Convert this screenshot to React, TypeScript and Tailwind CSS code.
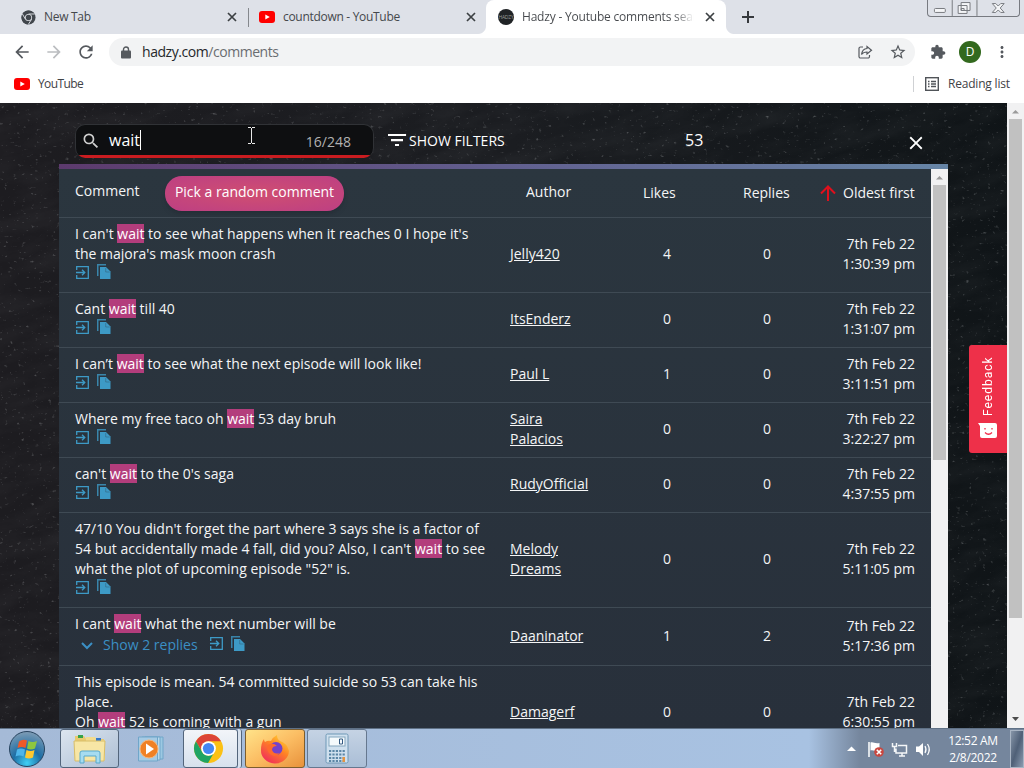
import type { ReactNode } from "react";
import { MdSearch, MdClose, MdStarBorder, MdMoreVert, MdArrowBack, MdArrowForward, MdRefresh } from "react-icons/md";

type Comment = {
  lines: string[];
  author: string[];
  likes: number;
  replies: number;
  date: string;
  time: string;
};

const comments: Comment[] = [
  {
    lines: ["I can't wait to see what happens when it reaches 0 I hope it's", "the majora's mask moon crash"],
    author: ["Jelly420"],
    likes: 4,
    replies: 0,
    date: "7th Feb 22",
    time: "1:30:39 pm",
  },
  { lines: ["Cant wait till 40"], author: ["ItsEnderz"], likes: 0, replies: 0, date: "7th Feb 22", time: "1:31:07 pm" },
  {
    lines: ["I can’t wait to see what the next episode will look like!"],
    author: ["Paul L"],
    likes: 1,
    replies: 0,
    date: "7th Feb 22",
    time: "3:11:51 pm",
  },
  {
    lines: ["Where my free taco oh wait 53 day bruh"],
    author: ["Saira", "Palacios"],
    likes: 0,
    replies: 0,
    date: "7th Feb 22",
    time: "3:22:27 pm",
  },
  { lines: ["can't wait to the 0's saga"], author: ["RudyOfficial"], likes: 0, replies: 0, date: "7th Feb 22", time: "4:37:55 pm" },
  {
    lines: [
      "47/10 You didn't forget the part where 3 says she is a factor of",
      "54 but accidentally made 4 fall, did you? Also, I can't wait to see",
      'what the plot of upcoming episode "52" is.',
    ],
    author: ["Melody", "Dreams"],
    likes: 0,
    replies: 0,
    date: "7th Feb 22",
    time: "5:11:05 pm",
  },
  {
    lines: ["I cant wait what the next number will be"],
    author: ["Daaninator"],
    likes: 1,
    replies: 2,
    date: "7th Feb 22",
    time: "5:17:36 pm",
  },
  {
    lines: ["This episode is mean. 54 committed suicide so 53 can take his", "place.", "Oh wait 52 is coming with a gun"],
    author: ["Damagerf"],
    likes: 0,
    replies: 0,
    date: "7th Feb 22",
    time: "6:30:55 pm",
  },
];

const Highlight = ({ text }: { text: string }) => (
  <>
    {text.split(/(wait)/).map((part, i) =>
      part === "wait" ? (
        <mark key={i} className="bg-[#b33d7c] text-white">
          {part}
        </mark>
      ) : (
        part
      )
    )}
  </>
);

const YoutubeIcon = () => (
  <svg viewBox="0 0 16 12" className="h-3 w-4 shrink-0">
    <rect width="16" height="12" rx="3" fill="#f00" />
    <path d="M6.3 3.4v5.2L10.8 6z" fill="#fff" />
  </svg>
);

const ChromeLogo = ({ className, mono }: { className: string; mono?: boolean }) => (
  <svg viewBox="0 0 32 32" className={className}>
    <circle cx="16" cy="16" r="15" fill={mono ? "#41464c" : "#fbc116"} />
    <path d="M3 8.5A15 15 0 0 1 29 8.5H16A7.5 7.5 0 0 0 9.5 19.7z" fill={mono ? "#41464c" : "#dc4437"} />
    <path d="M3 8.5A15 15 0 0 0 15.5 31l6.6-11.3a7.2 7.2 0 0 1-12.6 0z" fill={mono ? "#41464c" : "#1fa463"} />
    {mono && <path d="M16 8.5h13M9.5 19.7 3 8.5M22.5 19.7 15.5 31" stroke="#dee1e6" strokeWidth="2" />}
    <circle cx="16" cy="16" r="7.6" fill={mono ? "#dee1e6" : "#fff"} />
    <circle cx="16" cy="16" r="5.8" fill={mono ? "#41464c" : "#4487f3"} />
  </svg>
);

const CloseTab = () => (
  <svg viewBox="0 0 10 10" className="h-2.5 w-2.5 shrink-0" stroke="#3c4043" strokeWidth="1.7">
    <path d="m1 1 8 8M9 1 1 9" />
  </svg>
);

const TabBar = () => (
  <div className="flex h-[34px] shrink-0 bg-[#dee1e8] text-[12px] tracking-[-0.3px] text-[#45484c]">
    <div className="flex w-[248px] items-center pl-[21px]">
      <ChromeLogo className="h-[15px] w-[15px]" mono />
      <span className="ml-2 w-[183px]">New Tab</span>
      <CloseTab />
    </div>
    <div className="flex w-[230px] items-center">
      <span className="h-[19px] w-px bg-[#85888d]" />
      <span className="ml-2.5 flex">
        <YoutubeIcon />
      </span>
      <span className="ml-2 w-[183px]">countdown - YouTube</span>
      <CloseTab />
    </div>
    <span className="h-2 w-2 self-end bg-[radial-gradient(circle_at_0_0,#dee1e8_7.5px,#fff_8.5px)]" />
    <div className="flex w-[240px] items-center rounded-t-lg bg-white pl-3">
      <svg viewBox="0 0 16 16" className="h-4 w-4 shrink-0">
        <circle cx="8" cy="8" r="8" fill="#202326" />
        <text x="8" y="10" fontSize="5" fill="#999" textAnchor="middle" letterSpacing="-.2">
          HADZY
        </text>
      </svg>
      <span className="ml-2 w-[172px] overflow-hidden bg-linear-to-r from-[#45484c] from-88% to-transparent bg-clip-text tracking-[-0.2px] whitespace-nowrap text-transparent">
        Hadzy - Youtube comments sear
      </span>
      <span className="ml-[11px]">
        <CloseTab />
      </span>
    </div>
    <span className="h-2 w-2 self-end bg-[radial-gradient(circle_at_100%_0,#dee1e8_7.5px,#fff_8.5px)]" />
    <svg viewBox="0 0 12 12" className="mt-[11px] ml-2 h-3 w-3" stroke="#36393d" strokeWidth="2">
      <path d="M6 0v12M0 6h12" />
    </svg>
    <div className="ml-auto flex h-[17px] w-[93px] rounded-b-[4px] border border-t-0 border-[#777a80]">
      <svg viewBox="0 0 92 16" className="h-4 w-[92px]" fill="none" stroke="#777a80">
        <path d="M24.500 0v16M49.500 0v16" />
        <rect x="6.500" y="8.500" width="11" height="4" rx="1" fill="#f4f5f7" />
        <path d="M33.500 2.500h9v8h-9zM30.500 5.500h9v8h-9zM33.500 8.500h3v2h-3z" fill="#f4f5f7" />
        <path d="M65 3.500h3.500L71 6l2.500-2.500H77L73 8l4 4.500h-3.500L71 10l-2.500 2.500H65L69 8z" fill="#f4f5f7" />
      </svg>
    </div>
    <span className="w-[4px]" />
  </div>
);

const AddressBar = () => (
  <div className="flex h-9 shrink-0 items-center bg-white text-[#55595e]">
    <MdArrowBack className="ml-3 h-5 w-5" />
    <MdArrowForward className="ml-3 h-5 w-5 text-[#bbbdc0]" />
    <MdRefresh className="ml-3 h-5 w-5" />
    <div className="ml-[13px] flex h-7 w-[806px] items-center rounded-full bg-[#f2f3f4] pl-3 text-[14px] leading-5">
      <svg viewBox="0 0 10 13" className="h-[13px] w-2.5">
        <rect y="4.500" width="10" height="8" rx="1" fill="#55595e" />
        <path d="M2.500 5V3.500a2.500 2.500 0 0 1 5 0V5" fill="none" stroke="#55595e" strokeWidth="1.400" />
      </svg>
      <span className="ml-[11px] w-[693px] tracking-[-0.45px] text-[#6a6d71]">
        <span className="text-[#25282b]">hadzy.com</span>/comments
      </span>
      <svg viewBox="0 0 16 16" className="ml-[22px] h-4 w-4" fill="none" stroke="currentColor" strokeWidth="1.200">
        <path d="M6 3H3.500A1.500 1.500 0 0 0 2 4.500v8A1.500 1.500 0 0 0 3.500 14H11a1.500 1.500 0 0 0 1.500-1.500V11" />
        <path d="M10 2.500v2C6.500 4.800 5 7 4.500 10.500 6 8.400 7.500 8 10 8v2l4.500-3.800z" />
      </svg>
      <MdStarBorder className="ml-4 h-[18px] w-[18px]" />
    </div>
    <svg viewBox="0 0 24 24" className="ml-[15px] h-4 w-4" fill="currentColor">
      <path d="M20.500 11H19V7c0-1.100-.9-2-2-2h-4V3.500C13 2.120 11.880 1 10.500 1S8 2.120 8 3.500V5H4c-1.100 0-2 .9-2 2v3.800h1.500c1.500 0 2.700 1.200 2.700 2.700s-1.200 2.700-2.700 2.700H2V20c0 1.100.9 2 2 2h3.800v-1.500c0-1.500 1.200-2.700 2.700-2.700s2.700 1.200 2.700 2.700V22H17c1.100 0 2-.9 2-2v-4h1.500c1.380 0 2.500-1.120 2.500-2.500S21.880 11 20.500 11z" />
    </svg>
    <span className="ml-[13px] flex h-[22px] w-[22px] items-center justify-center rounded-full bg-[#33691e] text-[12px] text-white">D</span>
    <MdMoreVert className="ml-3 h-[18px] w-[18px]" />
  </div>
);

const BookmarkBar = () => (
  <div className="flex h-[33px] shrink-0 items-center bg-white pb-[5px] text-[12px] tracking-[-0.6px] text-[#3f4246]">
    <span className="ml-3.5 flex">
      <YoutubeIcon />
    </span>
    <span className="ml-2">YouTube</span>
    <span className="ml-auto h-4 w-px bg-[#cfd1d4]" />
    <svg viewBox="0 0 14 14" className="ml-[11px] h-3.5 w-3.5" fill="none" stroke="#505459" strokeWidth="1.400">
      <rect x=".7" y=".7" width="12.600" height="12.600" />
      <path d="M3 4.500h1.500M3 7h1.500M3 9.500h1.500M6 4.500h5M6 7h5M6 9.500h5" />
    </svg>
    <span className="ml-[9px] w-[76px] tracking-[-0.2px] whitespace-nowrap">Reading list</span>
  </div>
);

const StoneBackground = () => (
  <svg className="absolute inset-0 h-full w-full" preserveAspectRatio="none">
    <defs>
      <linearGradient id="shade">
        <stop offset="0" stopColor="#1d1c20" />
        <stop offset=".5" stopColor="#1b1d21" />
        <stop offset="1" stopColor="#0f1417" />
      </linearGradient>
      <filter id="stone" x="0" y="0" width="100%" height="100%">
        <feTurbulence type="fractalNoise" baseFrequency="0.017 0.051" numOctaves="5" seed="8" />
        <feColorMatrix values="0 0 0 0 0.5  0 0 0 0 0.52  0 0 0 0 0.54  0.9 0.4 0 0 -0.5" />
      </filter>
      <filter id="grain" x="0" y="0" width="100%" height="100%">
        <feTurbulence type="fractalNoise" baseFrequency="0.23 0.31" numOctaves="2" seed="3" />
        <feColorMatrix values="0 0 0 0 0.6  0 0 0 0 0.62  0 0 0 0 0.63  4 0 0 0 -2.7" />
      </filter>
    </defs>
    <rect width="100%" height="100%" fill="url(#shade)" />
    <g transform="rotate(-14 500 300)">
      <rect x="-200" y="-200" width="1500" height="1100" filter="url(#stone)" opacity="0.1" />
    </g>
    <rect width="100%" height="100%" filter="url(#grain)" opacity="0.3" />
  </svg>
);

const SearchHeader = () => (
  <div className="flex h-[61px] items-center pt-[13px] text-white">
    <div className="mt-0.5 ml-4 flex h-[34px] w-[299px] flex-col overflow-hidden rounded-[10px] border border-b-0 border-[#303236] bg-[#0e0f11]">
      <div className="flex h-[30px] items-center">
        <MdSearch className="mt-px ml-[5px] h-5 w-5 text-[#cfcfcf]" />
        <span className="ml-2 border-r border-white text-[16px] leading-5">wait</span>
        <span className="mt-[3px] mr-[22px] ml-auto text-[14px] text-[#b2b2b2]">16/248</span>
      </div>
      <div className="h-[3px] bg-[#c91c20]" />
    </div>
    <svg viewBox="0 0 18 12" className="ml-[14px] h-3 w-[18px]" fill="currentColor">
      <path d="M0 0h18v2H0zM3 5h12v2.200H3zM7 10h4v2H7z" />
    </svg>
    <span className="ml-[3px] w-[276px] text-[14px]">SHOW FILTERS</span>
    <span className="w-[220px] text-[16px]">53</span>
    <MdClose className="mt-1.5 h-[22px] w-[22px]" />
  </div>
);

const CommentActions = () => (
  <>
    <svg viewBox="0 0 13 13" className="mt-px ml-px h-[13px] w-[13px]" fill="none" stroke="currentColor" strokeWidth="1.300">
      <path d="M.7 4V.7h11.600v11.600H.7V9" />
      <path d="M0 6.500h8.500M6 3.700l2.800 2.800L6 9.300" />
    </svg>
    <svg viewBox="0 0 14 15" className="ml-2 h-[15px] w-3.5" fill="currentColor">
      <path d="M0 0h9v1.500H1.500V12H0z" opacity=".8" />
      <path d="M3 3h6l4.500 4.500V15H3z" />
      <path d="M8.700 4v4h4" fill="none" stroke="#2a343f" strokeWidth=".5" opacity=".6" />
    </svg>
  </>
);

const Row = ({ comment }: { comment: Comment }) => (
  <div className="flex border-t border-[#3f4a54] pt-[6px] pb-2 pl-4">
    <div className="w-[435px]">
      {comment.lines.map((line) => (
        <p key={line} className="whitespace-nowrap">
          <Highlight text={line} />
        </p>
      ))}
      {comment.replies > 0 ? (
        <div className="flex h-[23px] items-center pb-0.5 pl-1.5 text-[#3b8fc4]">
          <svg viewBox="0 0 12 8" className="mt-0.5 h-2 w-3" fill="none" stroke="currentColor" strokeWidth="2">
            <path d="m1 1 5 5 5-5" />
          </svg>
          <span className="mr-[11px] ml-[10px] text-[14px]">Show {comment.replies} replies</span>
          <span className="flex pb-[3px] text-[#3d9ac6]">
            <CommentActions />
          </span>
        </div>
      ) : (
        <div className="flex h-5 items-center pb-[5px] text-[#3d9ac6]">
          <CommentActions />
        </div>
      )}
    </div>
    <div className="flex w-[107px] flex-col justify-center underline">
      {comment.author.map((name) => (
        <span key={name}>{name}</span>
      ))}
    </div>
    <div className="flex w-[100px] items-center justify-center">{comment.likes}</div>
    <div className="flex w-[100px] items-center justify-center">{comment.replies}</div>
    <div className="flex w-[98px] flex-col justify-center text-right">
      <span>{comment.date}</span>
      <span>{comment.time}</span>
    </div>
  </div>
);

const Scrollbar = ({ thumb }: { thumb: ReactNode }) => (
  <div className="flex w-[17px] shrink-0 flex-col items-center bg-[#f1f1f2]">
    <svg viewBox="0 0 17 16" className="h-4 w-[17px] shrink-0">
      <path d="M5 10.500h7L8.500 7z" fill="#9a9a9a" />
    </svg>
    {thumb}
  </div>
);

const Table = () => (
  <div className="flex h-[564px] w-[889px] flex-col bg-[#29333e]">
    <div className="h-[5px] shrink-0 bg-linear-to-r from-[#5c3a6d] via-[#615f8f] to-[#6685a6]" />
    <div className="flex min-h-0 grow">
      <div className="w-[872px] overflow-hidden bg-linear-to-b from-[#2b363f] to-[#28303b] text-[14px] leading-5 text-[#f4f5f6]">
        <div className="flex h-12 items-center pl-4">
          <span className="w-[90px] pb-1">Comment</span>
          <span className="flex h-[35px] w-[179px] items-center justify-center rounded-[17px] bg-radial from-[#d04e70] to-[#bd3f83] pb-0.5 text-white shadow-md">
            Pick a random comment
          </span>
          <span className="ml-[182px] w-[117px] pb-0.5">Author</span>
          <span className="w-[100px]">Likes</span>
          <span className="w-[77px]">Replies</span>
          <svg viewBox="0 0 16 16" className="mr-[7px] h-4 w-4" fill="none" stroke="#e00f1c" strokeWidth="2">
            <path d="M8 16V1.500M1 8.500l7-7 7 7" />
          </svg>
          <span className="whitespace-nowrap">Oldest first</span>
        </div>
        {comments.map((comment) => (
          <Row key={comment.time} comment={comment} />
        ))}
      </div>
      <Scrollbar thumb={<div className="h-[275px] w-[13px] bg-[#c1c1c1]" />} />
    </div>
  </div>
);

const Feedback = () => (
  <div className="absolute top-[242px] right-[17px] flex h-[108px] w-[38px] flex-col items-center rounded-l-[3px] bg-[#ee3049] pt-[10px] text-white">
    <span className="h-[61px] rotate-180 text-[12px] leading-4 tracking-[1px] [writing-mode:vertical-rl] font-['Roboto']">Feedback</span>
    <svg viewBox="0 0 20 17" className="mt-1.5 h-[17px] w-5">
      <path d="M0 1h17a2 2 0 0 1 2 2v11a2 2 0 0 1-2 2H4a2 2 0 0 1-2-2V4z" fill="#fff" />
      <path d="M7 6v1.500M14 6v1.500M7 10.500q3.500 3.500 7 0" stroke="#f02d4b" strokeWidth="1.300" fill="none" />
    </svg>
  </div>
);

const StartOrb = () => (
  <svg viewBox="0 0 38 38" className="ml-2 h-[38px] w-[38px]">
    <defs>
      <radialGradient id="orb" cx=".5" cy=".9" r=".9">
        <stop offset="0" stopColor="#3fd0f5" />
        <stop offset=".45" stopColor="#1d6ea5" />
        <stop offset="1" stopColor="#7f9cb5" />
      </radialGradient>
    </defs>
    <circle cx="19" cy="19" r="17.500" fill="url(#orb)" stroke="#27435f" />
    <path d="M11 11.500q4-3 8-1l-1.500 7.500q-4-2-8 0z" fill="#ef5a28" />
    <path d="M20.500 11q4 2 8.500 0l-2 7.500q-4 2-8 0z" fill="#8dc63f" />
    <path d="M9 19.500q4-2 8 0l-1.500 7q-4-2-8 0z" fill="#4db5ea" />
    <path d="M18.500 20q4 2 8 0L25 27.500q-4 2-8 0z" fill="#fdc82f" />
  </svg>
);

const FolderIcon = () => (
  <svg viewBox="0 0 34 32" className="h-8 w-[34px]">
    <path d="M2 3h9l2 3h18v22H2z" fill="#e8ca70" />
    <path d="M5 2h5v3H5z" fill="#35a24a" />
    <path d="M13 4h9l2 3h8v20H13z" fill="#f3dc8e" />
    <path d="M23 5h5v3h-5z" fill="#3479c9" />
    <path d="M1 8h31l-1 20H2z" fill="#f7e6a5" stroke="#d8bd68" />
    <path d="M7 30V20q0-2 2-2h16q2 0 2 2v10h-4v-7H11v7z" fill="#a6dcf0" stroke="#58a9cc" />
  </svg>
);

const MediaIcon = () => (
  <svg viewBox="0 0 28 28" className="h-7 w-7">
    <path d="M8 2h18v22H8z" fill="#9cc8e2" stroke="#70a6c9" />
    <path d="M5 2h18v23H5z" fill="#b9daed" stroke="#70a6c9" />
    <path d="M1.500 2h19v24h-19z" fill="#a6cbe4" stroke="#70a6c9" />
    <circle cx="12" cy="14" r="9" fill="#f08125" stroke="#f7b67a" />
    <path d="M9 8.500v11l8-5.500z" fill="#fff" />
  </svg>
);

const FirefoxIcon = () => (
  <svg viewBox="0 0 30 30" className="h-[30px] w-[30px]">
    <defs>
      <linearGradient id="fox" x1=".9" y1="0" x2=".2" y2="1">
        <stop offset="0" stopColor="#ffe13a" />
        <stop offset=".45" stopColor="#ff8324" />
        <stop offset="1" stopColor="#f0285e" />
      </linearGradient>
    </defs>
    <path d="M4 5q0 2 1 3 3-2 6-1 2-4 6-6 0 4 3 6 7 2 9 10A14 13 0 0 1 1 16Q1 9 4 5z" fill="url(#fox)" />
    <circle cx="16" cy="14.500" r="6.500" fill="#7542c9" />
    <path d="M8 11q5-3 9 1-5 0-5 4 2 5 8 3-6 6-11 0-3-4-1-8z" fill="#ff6a2c" />
  </svg>
);

const CalculatorIcon = () => (
  <svg viewBox="0 0 24 32" className="h-8 w-6">
    <rect x="1" y="1" width="22" height="29" rx="1.500" fill="#cfe0ee" stroke="#6f98b6" />
    <rect x="4" y="4" width="16" height="9" fill="#f5fafc" stroke="#83a5bd" />
    <path d="M14.500 6h3v5h-3z" fill="none" stroke="#355b83" />
    <path d="M4 18h16M4 21.500h16M4 25h16M4 28h16" stroke="#5b86a6" strokeWidth="2" strokeDasharray="2.200 1.200" />
    <path d="M17.500 24h2.500v5h-2.500z" fill="#e49440" />
  </svg>
);

const Taskbar = () => (
  <div className="flex h-10 shrink-0 items-center border-t border-[#5f7186] bg-linear-to-r from-[#a5bad7] via-[#a8c2e2] via-79% to-[#75869d] to-84%">
    <StartOrb />
    <div className="ml-[14px] flex h-[39px] w-[59px] items-center justify-center rounded-[3px] border border-[#53657b] bg-linear-to-br from-[#dce5ef] to-[#adbfd4]">
      <FolderIcon />
    </div>
    <div className="flex w-[64px] justify-center">
      <MediaIcon />
    </div>
    <div className="flex h-[39px] w-[55px] items-center justify-center rounded-[3px] border border-[#53657b] bg-linear-to-b from-[#f2f5f9] to-[#d7e1ed] pr-1">
      <ChromeLogo className="h-[31px] w-[31px]" />
    </div>
    <div className="h-[39px] w-1 rounded-r-[3px] border-r border-[#53657b] bg-[#d7e1ed]" />
    <div className="ml-[3px] flex h-[39px] w-[60px] items-center justify-center rounded-[3px] border border-[#7c5d2f] bg-linear-to-br from-[#ffe389] via-[#fbbd63] to-[#e8923b]">
      <FirefoxIcon />
    </div>
    <div className="ml-[2px] flex h-[39px] w-[60px] items-center justify-center rounded-[3px] border border-[#66788f] bg-linear-to-b from-[#c5d3e4] to-[#aabed6]">
      <CalculatorIcon />
    </div>
    <svg viewBox="0 0 90 20" className="ml-auto h-5 w-[90px]" fill="none">
      <path d="M2 12h9L6.500 7.500z" fill="#fff" />
      <path d="M24 3v15" stroke="#fff" strokeWidth="1.500" />
      <path d="M25.500 3.500c3-1 4 1.500 9 .5v8c-4 1-6-1.500-9-.5z" fill="#fff" />
      <circle cx="34" cy="13" r="4.800" fill="#c9473f" />
      <path d="m31.800 10.800 4.400 4.400m0-4.400-4.400 4.400" stroke="#fff" strokeWidth="1.600" />
      <path d="M53 6.500h8.500V14H51V9.500M54 17h6M57 14v3M47.500 4v3.500h4V4M49.500 7.500V13" stroke="#f4f6f8" strokeWidth="1.500" />
      <path d="M71 7.500h3L78 4v13l-4-4h-3z" fill="#fff" />
      <path d="M80 7q2 3.500 0 7M82.500 5q3.500 5.500 0 11" stroke="#fff" strokeWidth="1.200" />
    </svg>
    <div className="ml-[5px] w-[66px] text-center text-[12px] leading-[17px] tracking-[-0.3px] text-white">
      <p>12:52 AM</p>
      <p>2/8/2022</p>
    </div>
    <div className="ml-1 h-[38px] w-[14px] border border-[#a9b5c4] bg-linear-to-br from-[#8795a8] via-[#4f6077] to-[#8b9bb0]" />
  </div>
);

const App = () => {
  return (
    <div className="flex h-[768px] w-[1024px] flex-col overflow-hidden font-['Open_Sans','Noto_Sans',sans-serif]">
      <TabBar />
      <AddressBar />
      <BookmarkBar />
      <div className="relative flex h-[625px] shrink-0 overflow-hidden">
        <StoneBackground />
        <div className="relative w-[1007px] pl-[59px]">
          <SearchHeader />
          <Table />
        </div>
        <div className="relative flex">
          <Scrollbar
            thumb={
              <>
                <div className="h-[499px] w-[13px] shrink-0 bg-[#c1c1c1]" />
                <svg viewBox="0 0 17 16" className="mt-auto h-4 w-[17px] shrink-0">
                  <path d="M5 5h7L8.500 9z" fill="#4c4c4c" />
                </svg>
              </>
            }
          />
        </div>
        <Feedback />
        <svg viewBox="0 0 9 17" className="absolute top-[24px] left-[247px] h-[17px] w-[9px]" fill="none" stroke="#e8e8e8">
          <path d="M1 .5h3M5 .5h3M4.500 1v15M1 16.500h3M5 16.500h3" />
        </svg>
      </div>
      <Taskbar />
    </div>
  );
};

export default App;
